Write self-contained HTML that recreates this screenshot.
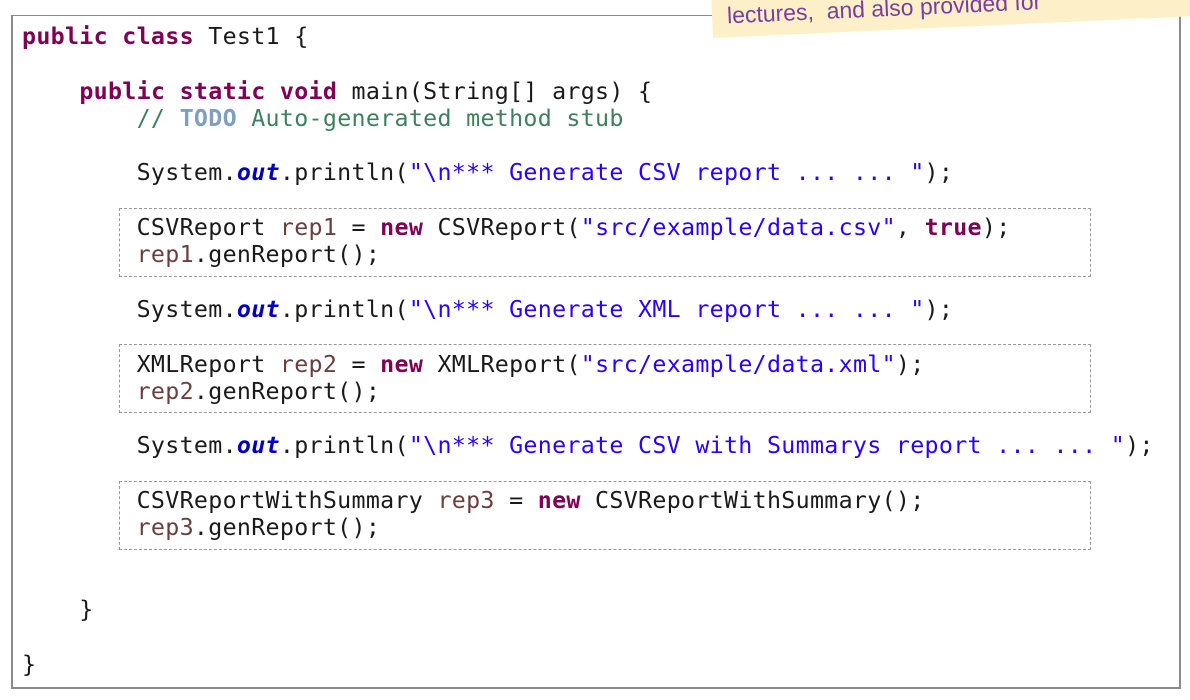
<!DOCTYPE html>
<html><head><meta charset="utf-8"><style>
html,body{margin:0;padding:0;background:#fff;width:1190px;height:700px;overflow:hidden;position:relative}
.box{position:absolute;left:11px;top:15px;width:1170px;height:674px;border:2px solid #8a8a8a;border-top-width:1.5px;box-sizing:border-box}
pre{position:absolute;left:22px;top:23px;margin:0;font-family:"DejaVu Sans Mono","Liberation Mono",monospace;font-size:23.3px;letter-spacing:0.3px;line-height:27.3px;color:#1a1a1a}
.k{color:#7f0055;font-weight:bold}
.s{color:#2a00ff}
.c{color:#3f7f5f}
.t{color:#7f9fbf;font-weight:bold}
.f{color:#0000c0;font-weight:bold;font-style:italic}
.v{color:#6a3e3e}
.d{position:absolute;left:119px;width:972px;height:69px;border:1.5px dashed #999;box-sizing:border-box}
.note{position:absolute;left:713px;top:-28px;width:520px;height:66px;background:#fdf0c8;transform:rotate(-2.6deg);transform-origin:0 100%}
.note span{position:absolute;left:15px;top:31px;font-family:"Liberation Sans",sans-serif;font-size:23px;color:#7a3ea0}
</style></head><body>
<div class="box"></div>
<div class="d" style="top:208px"></div>
<div class="d" style="top:344px"></div>
<div class="d" style="top:481px"></div>
<div class="note"><span>lectures,&nbsp; and also provided for</span></div>
<pre><span class="k">public class</span> Test1 {

    <span class="k">public static void</span> main(String[] args) {
        <span class="c">// </span><span class="t">TODO</span><span class="c"> Auto-generated method stub</span>

        System.<span class="f">out</span>.println(<span class="s">"\n*** Generate CSV report ... ... "</span>);

        CSVReport <span class="v">rep1</span> = <span class="k">new</span> CSVReport(<span class="s">"src/example/data.csv"</span>, <span class="k">true</span>);
        <span class="v">rep1</span>.genReport();

        System.<span class="f">out</span>.println(<span class="s">"\n*** Generate XML report ... ... "</span>);

        XMLReport <span class="v">rep2</span> = <span class="k">new</span> XMLReport(<span class="s">"src/example/data.xml"</span>);
        <span class="v">rep2</span>.genReport();

        System.<span class="f">out</span>.println(<span class="s">"\n*** Generate CSV with Summarys report ... ... "</span>);

        CSVReportWithSummary <span class="v">rep3</span> = <span class="k">new</span> CSVReportWithSummary();
        <span class="v">rep3</span>.genReport();


    }

}</pre>
</body></html>
